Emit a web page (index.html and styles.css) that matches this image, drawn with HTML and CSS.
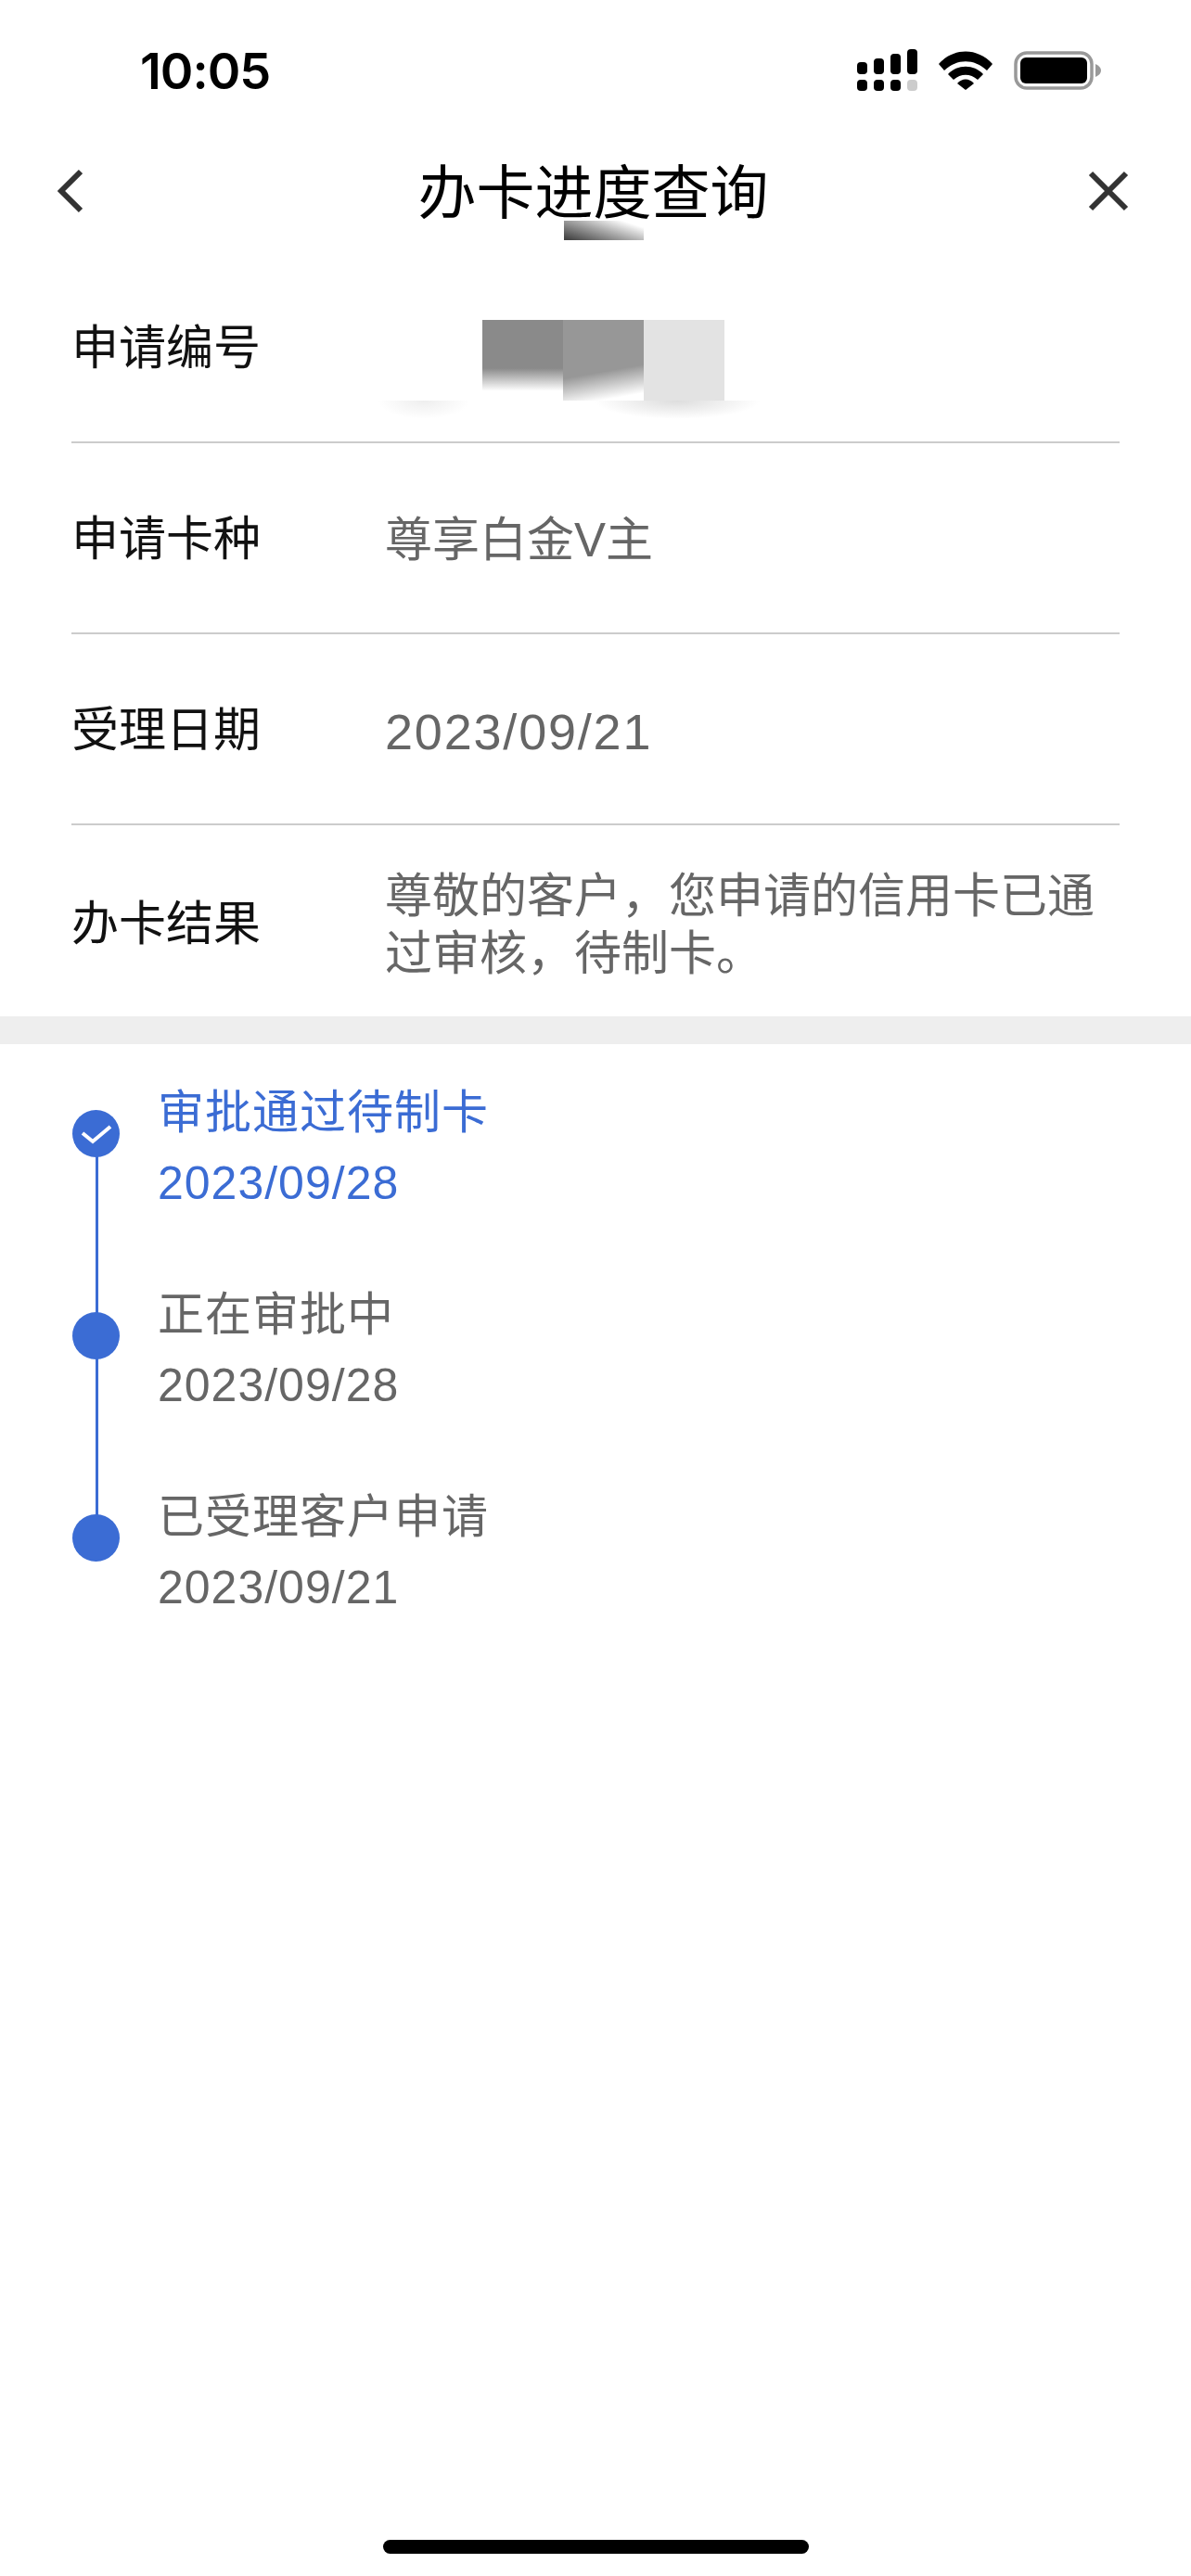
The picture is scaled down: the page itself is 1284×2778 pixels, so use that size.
FILE: index.html
```html
<!DOCTYPE html>
<html lang="zh-CN">
<head>
  <meta charset="UTF-8">
  <meta name="viewport" content="width=device-width, initial-scale=1.0">
  <title>办卡进度查询</title>
  <link rel="stylesheet" href="styles.css">
</head>
<body>
  <div class="status-bar">
    <span class="time">10:05</span>
    <div class="status-icons">
      <svg class="signal" width="65" height="45" viewBox="0 0 65 45">
        <rect x="0" y="14" width="11" height="13" rx="4" fill="#000"/>
        <rect x="18" y="10" width="11" height="17" rx="4" fill="#000"/>
        <rect x="36" y="5" width="11" height="22" rx="4" fill="#000"/>
        <rect x="54" y="0" width="11" height="27" rx="4" fill="#000"/>
        <rect x="0" y="33" width="11" height="12" rx="4" fill="#000"/>
        <rect x="18" y="33" width="11" height="12" rx="4" fill="#000"/>
        <rect x="36" y="33" width="11" height="12" rx="4" fill="#000"/>
        <rect x="54" y="33" width="11" height="12" rx="4" fill="#ccc"/>
      </svg>
      <svg class="wifi" width="58" height="42" viewBox="0 0 58 42">
        <path d="M0 14 C16 -4 42 -4 58 14 L52 21 C38 8 20 8 6 21 Z" fill="#000"/>
        <path d="M10 25 C20 14 38 14 48 25 L42 31 C34 24 24 24 16 31 Z" fill="#000"/>
        <path d="M20 35 C25 29 33 29 38 35 L29 42 Z" fill="#000"/>
      </svg>
      <svg class="battery" width="94" height="42" viewBox="0 0 94 42">
        <rect x="2" y="2" width="82" height="38" rx="12" fill="none" stroke="#999" stroke-width="3.5"/>
        <rect x="7" y="7" width="72" height="28" rx="6" fill="#000"/>
        <path d="M88 14 C92 16 94 18 94 21 C94 24 92 26 88 28 Z" fill="#999"/>
      </svg>
    </div>
  </div>

  <div class="nav-bar">
    <svg class="nav-icon" width="28" height="48" viewBox="0 0 28 48">
      <path d="M26 3 L5 24 L26 45" fill="none" stroke="#333" stroke-width="6"/>
    </svg>
    <h1 class="nav-title">办卡进度查询</h1>
    <svg class="nav-icon" width="46" height="46" viewBox="0 0 46 46">
      <path d="M4 4 L42 42 M42 4 L4 42" fill="none" stroke="#333" stroke-width="6"/>
    </svg>
    <div class="smudge-title"></div>
  </div>

  <div class="info-list">
    <div class="info-row">
      <span class="info-label">申请编号</span>
      <div class="info-value redacted">
        <i class="blur-block blur-a"></i><i class="blur-block blur-b"></i><i class="blur-block blur-c"></i>
        <i class="shade shade-left"></i><i class="shade shade-right"></i>
      </div>
    </div>
    <div class="info-row">
      <span class="info-label">申请卡种</span>
      <span class="info-value">尊享白金V主</span>
    </div>
    <div class="info-row">
      <span class="info-label">受理日期</span>
      <span class="info-value info-date">2023/09/21</span>
    </div>
    <div class="info-row">
      <span class="info-label">办卡结果</span>
      <span class="info-value">尊敬的客户，您申请的信用卡已通过审核，待制卡。</span>
    </div>
  </div>

  <div class="band"></div>

  <div class="timeline">
    <div class="step step-current">
      <div class="step-dot">
        <svg width="34" height="22" viewBox="0 0 34 22">
          <path d="M2 10 L13 19 L32 3" fill="none" stroke="#fff" stroke-width="4"/>
        </svg>
      </div>
      <div class="step-text">
        <div class="step-title">审批通过待制卡</div>
        <div class="step-date">2023/09/28</div>
      </div>
    </div>
    <div class="step">
      <div class="step-dot"></div>
      <div class="step-text">
        <div class="step-title">正在审批中</div>
        <div class="step-date">2023/09/28</div>
      </div>
    </div>
    <div class="step step-last">
      <div class="step-dot"></div>
      <div class="step-text">
        <div class="step-title">已受理客户申请</div>
        <div class="step-date">2023/09/21</div>
      </div>
    </div>
  </div>

  <div class="home-bar"></div>
</body>
</html>
```

FILE: styles.css
```css
* {
  box-sizing: border-box;
}
body {
  margin: 0;
  height: 2778px;
  position: relative;
  background: #fff;
  font-family: "Liberation Sans", "Noto Sans CJK SC", sans-serif;
  overflow: hidden;
}

/* status bar */
.status-bar {
  height: 140px;
  padding: 47px 97px 0 151px;
  display: flex;
  justify-content: space-between;
  align-items: flex-start;
}
.time {
  font-family: Inter, "Liberation Sans", sans-serif;
  font-size: 54px;
  line-height: 60px;
  font-weight: 600;
  letter-spacing: -1px;
  color: #000;
}
.status-icons {
  display: flex;
  align-items: center;
  gap: 23px;
  margin-top: 6px;
}

/* nav */
.nav-bar {
  height: 132px;
  padding: 0 66px 8px 61px;
  display: flex;
  align-items: center;
  justify-content: space-between;
  position: relative;
}
.nav-icon {
  margin-top: 8px;
}
.nav-title {
  margin: 0 0 0 18px;
  font-size: 63px;
  font-weight: 400;
  color: #000;
}
.smudge-title {
  position: absolute;
  left: 608px;
  top: 98px;
  width: 86px;
  height: 21px;
  background: linear-gradient(18deg, #444 5%, #aaa 50%, #fff 85%);
}

/* info rows */
.info-list {
  padding: 0 77px;
}
.info-row {
  height: 206px;
  display: flex;
  align-items: center;
  border-bottom: 2px solid #ccc;
}
.info-row:last-child {
  border-bottom: none;
}
.info-label {
  width: 338px;
  flex: none;
  padding-bottom: 6px;
  font-size: 51px;
  color: #111;
}
.info-row:last-child .info-label {
  padding-bottom: 2px;
}
.info-value {
  padding-top: 5px;
  font-size: 51px;
  line-height: 62px;
  color: #666;
}
.info-row:last-child .info-value {
  padding-top: 10px;
}
.info-date {
  font-size: 54px;
  letter-spacing: 1.8px;
}
.redacted {
  display: flex;
  position: relative;
  padding: 28px 0 0 105px;
}
.blur-block {
  display: block;
  height: 87px;
  width: 87px;
}
.blur-a {
  background: linear-gradient(to bottom, #8a8a8a 60%, #fff 88%);
}
.blur-b {
  background: linear-gradient(170deg, #979797 62%, #fff 92%);
}
.blur-c {
  background: #e3e3e3;
}
.shade {
  position: absolute;
  top: 115px;
  height: 20px;
}
.shade-left {
  left: -8px;
  width: 100px;
  background: radial-gradient(ellipse at top, #eee, #fff 70%);
}
.shade-right {
  left: 225px;
  width: 180px;
  background: radial-gradient(ellipse at top, #ddd, #fff 70%);
}

.band {
  height: 30px;
  background: #eee;
}

/* timeline */
.timeline {
  padding: 36px 0 0 78px;
}
.step {
  display: flex;
  height: 218px;
  position: relative;
}
.step-dot {
  width: 51px;
  height: 51px;
  flex: none;
  margin-top: 35px;
  border-radius: 50%;
  background: #3b6cd4;
  display: flex;
  align-items: center;
  justify-content: center;
}
.step::before {
  content: "";
  position: absolute;
  left: 25px;
  top: 80px;
  width: 3px;
  height: 218px;
  background: #3b6cd4;
}
.step-last::before {
  display: none;
}
.step-text {
  margin-left: 41px;
}
.step-title {
  font-size: 50px;
  line-height: 76px;
  letter-spacing: 1px;
  color: #666;
}
.step-date {
  font-size: 50px;
  line-height: 76px;
  letter-spacing: 1px;
  color: #666;
}
.step-current .step-title,
.step-current .step-date {
  color: #3b6cd4;
}

.home-bar {
  position: absolute;
  left: 413px;
  bottom: 24px;
  width: 459px;
  height: 15px;
  border-radius: 8px;
  background: #000;
}
```
